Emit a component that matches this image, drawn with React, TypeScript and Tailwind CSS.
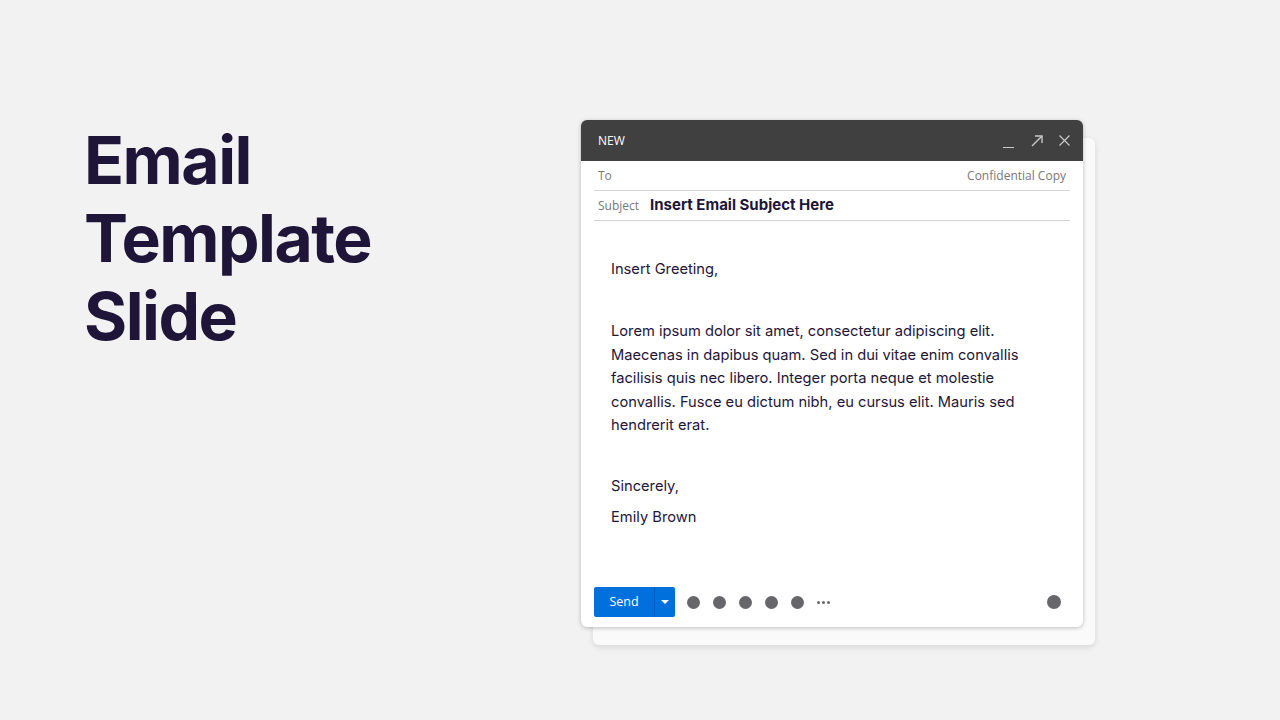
const BODY = [
    'Lorem ipsum dolor sit amet, consectetur adipiscing elit.',
    'Maecenas in dapibus quam. Sed in dui vitae enim convallis',
    'facilisis quis nec libero. Integer porta neque et molestie',
    'convallis. Fusce eu dictum nibh, eu cursus elit. Mauris sed',
    'hendrerit erat.',
];

function Dot() {
    return <span className="w-[13px] h-[13px] rounded-full bg-[#67676b]" />;
}

export default function App() {
    return (
        <div className="w-[1280px] h-[720px] bg-[#f2f2f2] flex font-['Inter',sans-serif] text-[#1e1538]">
            <div className="w-[581px] pl-[84px] pt-[121px]">
                <h1 className="text-[66px] leading-[78px] font-bold tracking-[-1.5px]">
                    Email<br />Template<br />Slide
                </h1>
            </div>

            <div className="pt-[120px]">
                <div className="relative">
                    <div className="absolute left-[12px] top-[18px] w-[502px] h-[507px] rounded-md bg-[#fafafa] shadow-[0_2px_6px_rgba(0,0,0,0.12)]" />
                    <div className="relative w-[502px] h-[507px] rounded-md bg-white shadow-[0_1px_4px_rgba(0,0,0,0.25)] flex flex-col overflow-hidden">
                        <div className="h-[41px] bg-[#404040] flex items-center pl-[17px] pr-[13px] text-white">
                            <span className="text-[12px] font-['Open_Sans',sans-serif]">NEW</span>
                            <div className="ml-auto flex items-center text-[#c8c8c8]">
                                <span className="w-[11px] h-[12px] border-b-[1.5px] border-[#c8c8c8] mt-[2px]" />
                                <svg className="ml-[17px]" width="12" height="12" viewBox="0 0 12 12" fill="none" stroke="currentColor" strokeWidth="1.4">
                                    <path d="M1 11 L11 1" />
                                    <path d="M4 1 H11 V8" />
                                </svg>
                                <svg className="ml-[16px]" width="11" height="11" viewBox="0 0 11 11" fill="none" stroke="currentColor" strokeWidth="1.2">
                                    <path d="M0.5 0.5 L10.5 10.5 M10.5 0.5 L0.5 10.5" />
                                </svg>
                            </div>
                        </div>

                        <div className="px-[13px]">
                            <div className="h-[30px] flex items-center border-b border-[#d4d4d4] px-[4px] text-[12px] text-[#777] font-['Open_Sans',sans-serif]">
                                <span>To</span>
                                <span className="ml-auto">Confidential Copy</span>
                            </div>
                            <div className="h-[30px] flex items-center border-b border-[#d4d4d4] px-[4px]">
                                <span className="text-[12px] text-[#777] font-['Open_Sans',sans-serif] w-[52px]">Subject</span>
                                <span className="text-[15px] font-bold">Insert Email Subject Here</span>
                            </div>
                        </div>

                        <div className="px-[30px] pt-[37px] text-[14.7px] leading-[23.4px]">
                            <p>Insert Greeting,</p>
                            <div className="mt-[39px]">
                                {BODY.map((line) => (
                                    <p key={line}>{line}</p>
                                ))}
                            </div>
                            <p className="mt-[38px]">Sincerely,</p>
                            <p className="mt-[7px]">Emily Brown</p>
                        </div>

                        <div className="mt-auto mb-[10px] px-[13px] flex items-center">
                            <div className="flex h-[30px] rounded-[2px] bg-[#0070dd] text-white overflow-hidden">
                                <span className="w-[60px] flex items-center justify-center text-[12.5px] font-['Open_Sans',sans-serif]">Send</span>
                                <span className="w-[21px] border-l border-[#005fbd] flex items-center justify-center">
                                    <span className="w-0 h-0 border-l-[4px] border-r-[4px] border-t-[4px] border-l-transparent border-r-transparent border-t-white" />
                                </span>
                            </div>
                            <div className="ml-[12px] flex items-center gap-[13px]">
                                <Dot /><Dot /><Dot /><Dot /><Dot />
                                <span className="flex gap-[2px]">
                                    <span className="w-[3px] h-[3px] rounded-full bg-[#67676b]" />
                                    <span className="w-[3px] h-[3px] rounded-full bg-[#67676b]" />
                                    <span className="w-[3px] h-[3px] rounded-full bg-[#67676b]" />
                                </span>
                            </div>
                            <span className="ml-auto mr-[9px] w-[14px] h-[14px] rounded-full bg-[#67676b]" />
                        </div>
                    </div>
                </div>
            </div>
        </div>
    );
}
